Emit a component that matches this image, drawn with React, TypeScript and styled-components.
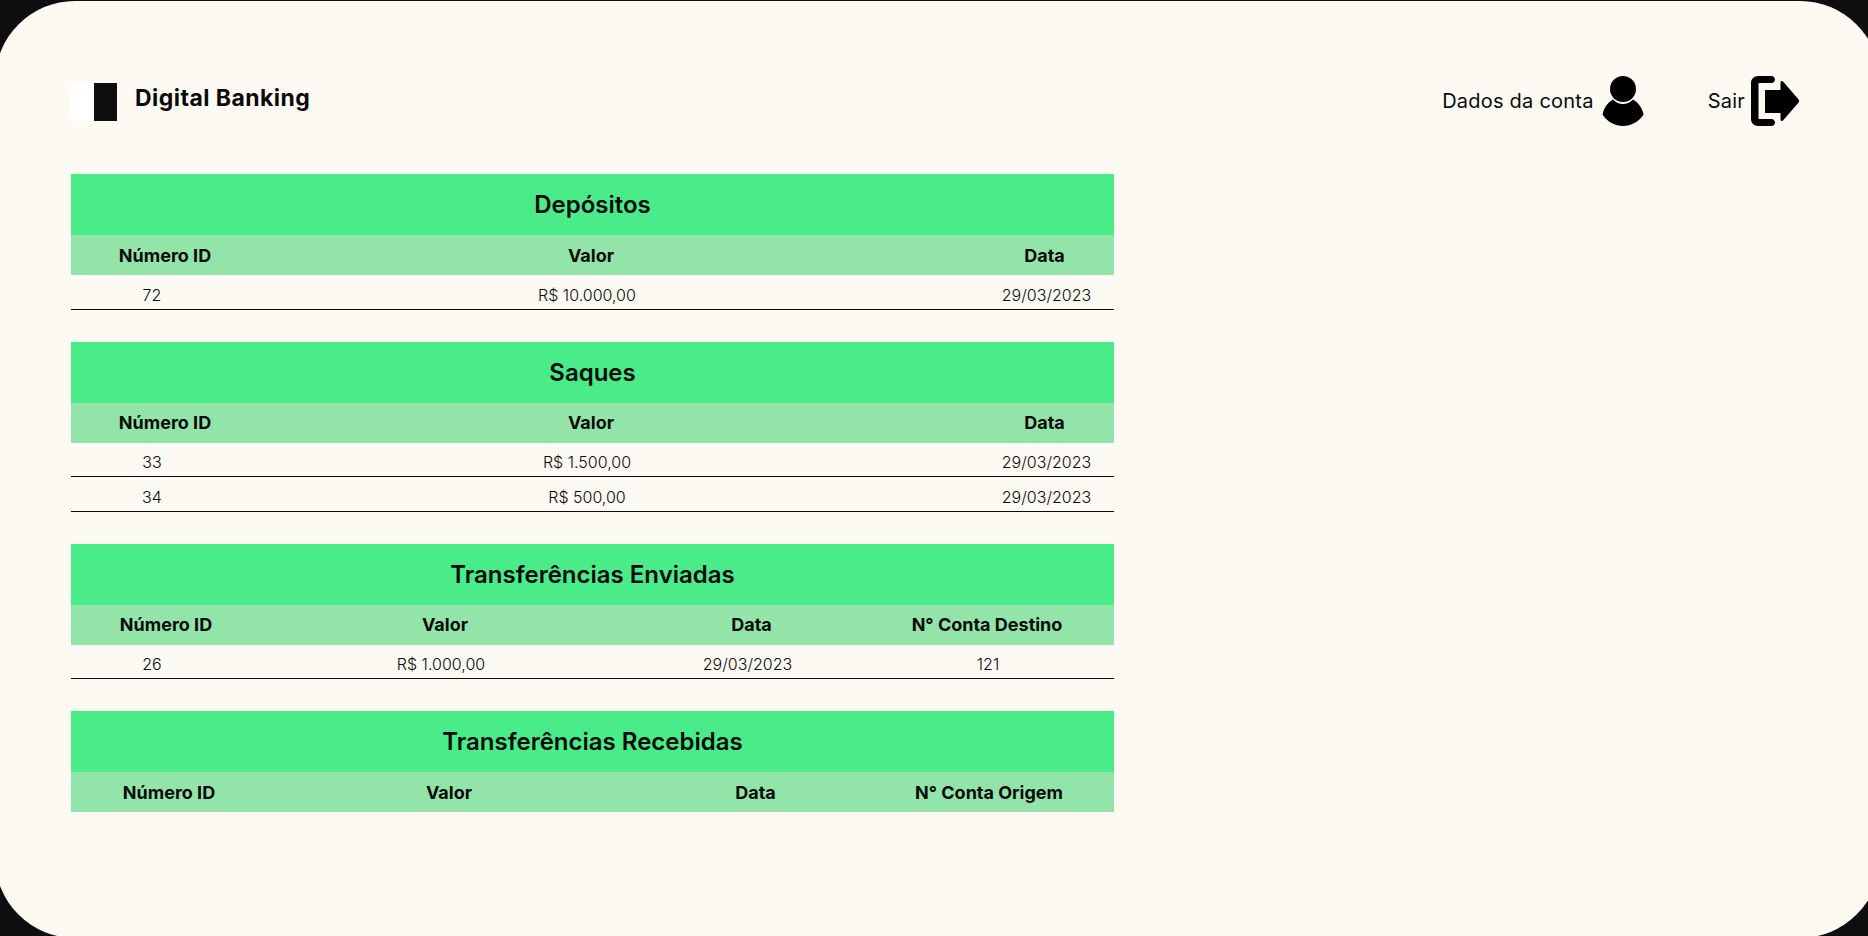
import React from "react";
import styled, { createGlobalStyle } from "styled-components";

const GlobalStyle = createGlobalStyle`
  * {
    box-sizing: border-box;
  }

  html,
  body {
    margin: 0;
    height: 100%;
    overflow: hidden;
    background: #0e0e10;
  }
`;

const Panel = styled.main`
  margin: 1px -12px 0 -5px;
  height: 937px;
  padding: 75px 80px 0 76px;
  background: #fdfaf3;
  border-radius: 80px;
  color: #0a0a0a;
  font-family: Inter, "Liberation Sans", sans-serif;
`;

const Header = styled.header`
  display: flex;
  align-items: center;
  justify-content: space-between;
  height: 50px;
  margin-bottom: 48px;
`;

const Brand = styled.div`
  display: flex;
  align-items: center;
  gap: 18px;
`;

const LogoMark = styled.div`
  display: flex;
  width: 46px;
  height: 38px;
  margin-top: 2px;
`;

const LogoHalf = styled.span<{ $color: string }>`
  flex: 1;
  background: ${(props) => props.$color};
`;

const BrandName = styled.h1`
  margin: 0 0 6px;
  font-size: 23px;
  font-weight: 700;
  letter-spacing: 0.45px;
`;

const Nav = styled.nav`
  display: flex;
  align-items: center;
  gap: 64px;
`;

const NavItem = styled.a<{ $gap: number }>`
  display: flex;
  align-items: center;
  gap: ${(props) => props.$gap}px;
  font-size: 20px;
  font-weight: 400;
  letter-spacing: 0.23px;
`;

const Sections = styled.div`
  display: flex;
  flex-direction: column;
  gap: 32px;
  width: 1043px;
`;

const Title = styled.h2`
  display: flex;
  align-items: center;
  justify-content: center;
  height: 61px;
  margin: 0;
  background: #4aec89;
  font-size: 24px;
  font-weight: 600;
`;

const Row = styled.div<{ $cols: string }>`
  display: grid;
  grid-template-columns: ${(props) => props.$cols};
  align-items: center;
`;

const HeadRow = styled(Row)`
  height: 40px;
  background: #92e4a9;
`;

const BodyRow = styled(Row)`
  height: 34.5px;
  padding-top: 6px;
  border-bottom: 1px solid #0a0a0a;
`;

const Cell = styled.div<{ $shift: number }>`
  padding-left: ${(props) => Math.max(props.$shift * 2, 0)}px;
  padding-right: ${(props) => Math.max(props.$shift * -2, 0)}px;
  text-align: center;
  white-space: nowrap;
`;

const HeadCell = styled(Cell)`
  font-size: 18px;
  font-weight: 700;
`;

const BodyCell = styled(Cell)`
  font-size: 16px;
  font-weight: 300;
`;

const PersonIcon = () => (
  <svg width="42" height="50" viewBox="0 0 42 50" fill="#000">
    <circle cx="21" cy="13" r="13" />
    <path d="M0.6 38.5C1.6 32 6 26 11 23.4C14 26.6 17.4 28 21 28C24.6 28 28 26.6 31 23.4C36 26 40.4 32 41.6 38.5C36.6 46 29 50 21 50C13 50 5.4 46 0.6 38.5Z" />
  </svg>
);

const ExitIcon = () => (
  <svg width="49" height="50" viewBox="0 0 49 50" fill="#000">
    <path d="M7 0H20.5C22.4 0 24 1.6 24 3.5C24 5.4 22.4 7 20.5 7H7.5V43H20.5C22.4 43 24 44.6 24 46.5C24 48.4 22.4 50 20.5 50H7C3.1 50 0 46.9 0 43V7C0 3.1 3.1 0 7 0Z" />
    <path d="M14 14H29.5V6.5C29.5 5 31 4.6 32 5.6L47.4 23.2C48.4 24.3 48.4 25.7 47.4 26.8L32 44.4C31 45.4 29.5 45 29.5 43.5V37H14V14Z" />
  </svg>
);

const threeCols = "188px 664px 191px";

const sections = [
  {
    title: "Depósitos",
    cols: threeCols,
    heads: [
      { text: "Número ID", shift: 0 },
      { text: "Valor", shift: 0 },
      { text: "Data", shift: 26 },
    ],
    cellShifts: [-13, -4, 28],
    rows: [["72", "R$ 10.000,00", "29/03/2023"]],
  },
  {
    title: "Saques",
    cols: threeCols,
    heads: [
      { text: "Número ID", shift: 0 },
      { text: "Valor", shift: 0 },
      { text: "Data", shift: 26 },
    ],
    cellShifts: [-13, -4, 28],
    rows: [
      ["33", "R$ 1.500,00", "29/03/2023"],
      ["34", "R$ 500,00", "29/03/2023"],
    ],
  },
  {
    title: "Transferências Enviadas",
    cols: "190px 368px 245px 240px",
    heads: [
      { text: "Número ID", shift: 0 },
      { text: "Valor", shift: 0 },
      { text: "Data", shift: 0 },
      { text: "N° Conta Destino", shift: -7 },
    ],
    cellShifts: [-14, -4, -4, -6],
    rows: [["26", "R$ 1.000,00", "29/03/2023", "121"]],
  },
  {
    title: "Transferências Recebidas",
    cols: "196px 368px 245px 234px",
    heads: [
      { text: "Número ID", shift: 0 },
      { text: "Valor", shift: -2 },
      { text: "Data", shift: -2 },
      { text: "N° Conta Origem", shift: -8 },
    ],
    cellShifts: [0, 0, 0, 0],
    rows: [],
  },
];

export default function App() {
  return (
    <>
      <GlobalStyle />
      <Panel>
        <Header>
          <Brand>
            <LogoMark>
              <LogoHalf $color="#ffffff" />
              <LogoHalf $color="#0e0e0e" />
            </LogoMark>
            <BrandName>Digital Banking</BrandName>
          </Brand>
          <Nav>
            <NavItem $gap={8}>
              Dados da conta
              <PersonIcon />
            </NavItem>
            <NavItem $gap={6}>
              Sair
              <ExitIcon />
            </NavItem>
          </Nav>
        </Header>
        <Sections>
          {sections.map((section) => (
            <section key={section.title}>
              <Title>{section.title}</Title>
              <HeadRow $cols={section.cols}>
                {section.heads.map((head) => (
                  <HeadCell key={head.text} $shift={head.shift}>
                    {head.text}
                  </HeadCell>
                ))}
              </HeadRow>
              {section.rows.map((row) => (
                <BodyRow key={row[0]} $cols={section.cols}>
                  {row.map((value, i) => (
                    <BodyCell key={i} $shift={section.cellShifts[i]}>
                      {value}
                    </BodyCell>
                  ))}
                </BodyRow>
              ))}
            </section>
          ))}
        </Sections>
      </Panel>
    </>
  );
}
